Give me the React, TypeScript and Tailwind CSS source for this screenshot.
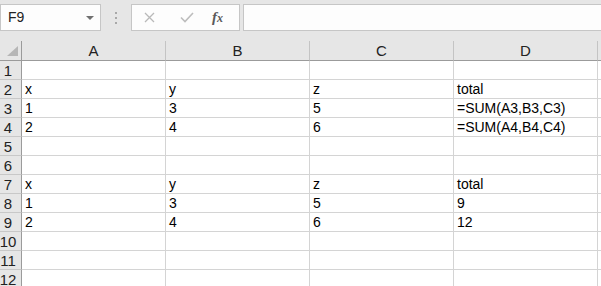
const cols = ["A", "B", "C", "D"];

const rows: string[][] = [
  ["", "", "", ""],
  ["x", "y", "z", "total"],
  ["1", "3", "5", "=SUM(A3,B3,C3)"],
  ["2", "4", "6", "=SUM(A4,B4,C4)"],
  ["", "", "", ""],
  ["", "", "", ""],
  ["x", "y", "z", "total"],
  ["1", "3", "5", "9"],
  ["2", "4", "6", "12"],
  ["", "", "", ""],
  ["", "", "", ""],
  ["", "", "", ""],
];

const font = { fontFamily: '"Liberation Sans", Arial, sans-serif' };

function Toolbar() {
  return (
    <div className="flex h-[41px] items-start bg-[#e6e6e6] pt-[4px]">
      {/* name box */}
      <div className="relative flex h-[27px] w-[101px] items-center border border-[#c6c6c6] bg-[#fdfdfd] pl-[7px] text-[14px] text-[#222]">
        F9
        <svg
          className="absolute right-[6px] top-[11px]"
          width="8"
          height="4"
          viewBox="0 0 8 4"
        >
          <path d="M0 0h8L4 4z" fill="#707070" />
        </svg>
      </div>
      {/* grip dots */}
      <div className="ml-[14px] mt-[8px] flex flex-col gap-[3px]">
        <span className="h-[2px] w-[2px] bg-[#a8a8a8]" />
        <span className="h-[2px] w-[2px] bg-[#a8a8a8]" />
        <span className="h-[2px] w-[2px] bg-[#a8a8a8]" />
      </div>
      {/* cancel / enter / fx */}
      <div className="ml-[14px] flex h-[27px] w-[109px] items-center border border-[#c6c6c6] bg-[#fdfdfd]">
        <svg className="ml-[12px]" width="11" height="11" viewBox="0 0 11 11">
          <path
            d="M1 1l9 9M10 1l-9 9"
            stroke="#b9b9b9"
            strokeWidth="1.3"
            fill="none"
          />
        </svg>
        <svg className="ml-[25px]" width="14" height="11" viewBox="0 0 14 11">
          <path
            d="M1 5.5l4 4L13 1"
            stroke="#bdbdbd"
            strokeWidth="1.6"
            fill="none"
          />
        </svg>
        <span
          className="ml-[18px] text-[15px] font-semibold italic text-[#5a5a5a]"
          style={{ fontFamily: '"Liberation Serif", serif' }}
        >
          f<span className="text-[12px]">x</span>
        </span>
      </div>
      {/* formula input */}
      <div className="ml-[3px] h-[27px] flex-1 border-y border-l border-[#c6c6c6] bg-[#fdfdfd]" />
    </div>
  );
}

function Corner() {
  return (
    <div className="relative h-[20px] border-b border-r border-[#9b9b9b] bg-[#e6e6e6]">
      <svg
        className="absolute bottom-[4px] right-[3px]"
        width="11"
        height="10"
        viewBox="0 0 11 10"
      >
        <path d="M11 0V10H0z" fill="#b6b6b6" />
      </svg>
    </div>
  );
}

export default function App() {
  return (
    <div className="h-[286px] w-[601px] overflow-hidden bg-white" style={font}>
      <Toolbar />
      <div className="grid grid-cols-[22px_144px_144px_144px_144px_1fr]">
        <Corner />
        {cols.map((c) => (
          <div
            key={c}
            className="flex h-[20px] items-center justify-center border-b border-r border-b-[#9b9b9b] border-r-[#c4c4c4] bg-[#e6e6e6] pt-[1px] text-[15px] text-[#222]"
          >
            {c}
          </div>
        ))}
        <div className="h-[20px] border-b border-[#9b9b9b] bg-[#e6e6e6]" />

        {rows.map((r, i) => (
          <div key={i} className="contents">
            <div className="flex h-[19px] items-end justify-center border-b border-r border-b-[#c8c8c8] border-r-[#9b9b9b] bg-[#e6e6e6] pr-[5px] text-[15px] leading-[17px] text-[#222]">
              {i + 1}
            </div>
            {r.map((v, j) => (
              <div
                key={j}
                className="flex h-[19px] items-end border-b border-r border-[#d4d4d4] pl-[3px] text-[14px] leading-[17px] text-black"
              >
                {v}
              </div>
            ))}
            <div className="h-[19px] border-b border-[#d4d4d4]" />
          </div>
        ))}
      </div>
    </div>
  );
}
